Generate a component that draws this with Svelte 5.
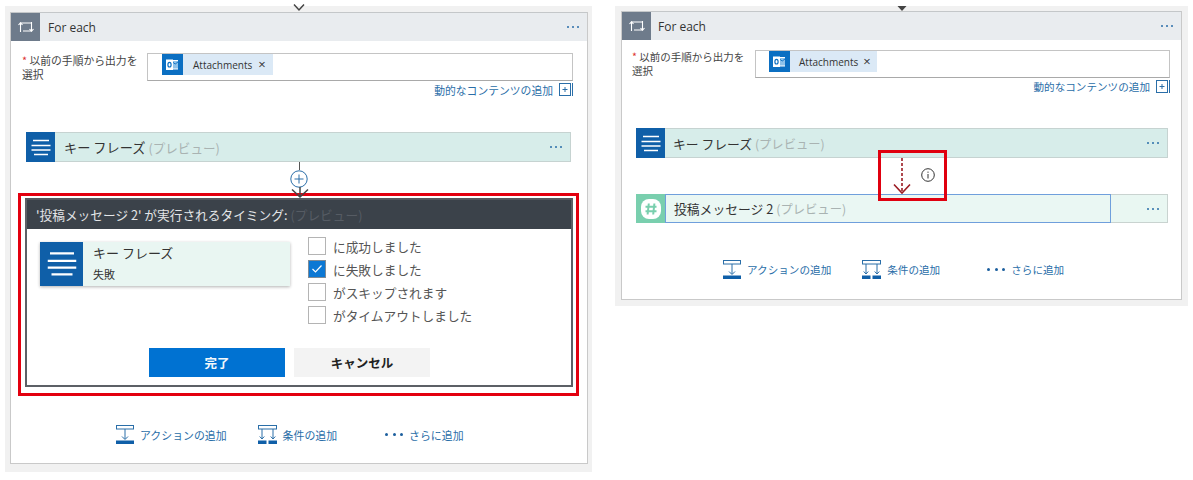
<script>
  const checks = [
    { label: 'に成功しました', on: false },
    { label: 'に失敗しました', on: true },
    { label: 'がスキップされます', on: false },
    { label: 'がタイムアウトしました', on: false }
  ];
</script>

{#snippet loopIcon()}
  <svg class="loop" width="18" height="14" viewBox="0 0 18 14" fill="none" stroke="#fff" stroke-width="1.1">
    <path d="M3.5 12V3H14.5M14.5 2V11H6" />
    <path d="M1.5 5L3.5 2.8L5.5 5M12.5 9L14.5 11.2L16.5 9" />
  </svg>
{/snippet}

{#snippet linesIcon(w)}
  <svg width={w} height={w * 0.85} viewBox="0 0 20 17" stroke="#fff" stroke-width="1.5">
    <path d="M2 1.5H18M0.5 6.5H19.5M0.5 11H19.5M3 15.5H17" />
  </svg>
{/snippet}

{#snippet outlook()}
  <svg width="21" height="21" viewBox="0 0 21 21">
    <rect width="21" height="21" fill="#0b6fc2" />
    <rect x="5" y="6" width="11" height="9.5" fill="#fff" />
    <rect x="10.5" y="7" width="5.5" height="7.5" fill="#8ec2ea" />
    <path d="M10.5 8l2.7 2 2.8-2" stroke="#0b6fc2" stroke-width="0.9" fill="none" />
    <rect x="4" y="5.5" width="7" height="10.5" fill="#fff" />
    <ellipse cx="7.5" cy="10.7" rx="1.6" ry="2.3" fill="none" stroke="#0b6fc2" stroke-width="1.2" />
  </svg>
{/snippet}

{#snippet addBox()}
  <svg width="14" height="13" viewBox="0 0 14 13" fill="none" stroke="#2a6ea8">
    <rect x="0.5" y="0.5" width="11" height="12" />
    <path d="M13.5 0V13M6 4V9M3.5 6.5H8.5" />
  </svg>
{/snippet}

{#snippet actionIcon()}
  <svg width="18" height="19" viewBox="0 0 18 19" fill="none" stroke="#2a6ea8">
    <rect x="0.5" y="0.5" width="17" height="3.5" />
    <path d="M9 4V14M6 11.5L9 14.5L12 11.5" />
    <rect x="0" y="15.5" width="18" height="3.5" fill="#0f5fa8" stroke="none" />
  </svg>
{/snippet}

{#snippet conditionIcon()}
  <svg width="19" height="19" viewBox="0 0 19 19" fill="none" stroke="#2a6ea8">
    <rect x="0.5" y="0.5" width="18" height="3.5" />
    <path d="M4 4V14M1.7 11.5L4 14L6.3 11.5M15 4V14M12.7 11.5L15 14L17.3 11.5" />
    <rect x="0" y="15.5" width="8.5" height="3.5" fill="#0f5fa8" stroke="none" />
    <rect x="10.5" y="15.5" width="8.5" height="3.5" fill="#0f5fa8" stroke="none" />
  </svg>
{/snippet}

{#snippet more()}
  <span class="more"><i></i><i></i><i></i></span>
{/snippet}

{#snippet header()}
  <div class="card-head">
    <div class="head-icon">{@render loopIcon()}</div>
    <span class="head-title">For each</span>
    {@render more()}
  </div>
{/snippet}

{#snippet form()}
  <div class="form-row">
    <div class="field-label"><span class="req">*</span> 以前の手順から出力を<br />選択</div>
    <div class="field-box">
      <span class="chip">
        {@render outlook()}
        <span class="chip-text">Attachments</span>
        <span class="chip-x">×</span>
      </span>
    </div>
  </div>
  <div class="dyn-link">動的なコンテンツの追加 {@render addBox()}</div>
{/snippet}

{#snippet keyBar()}
  <div class="step key">
    <div class="step-icon">{@render linesIcon(20)}</div>
    <div class="step-name">キー フレーズ <span class="preview">(プレビュー)</span></div>
    {@render more()}
  </div>
{/snippet}

{#snippet footer()}
  <div class="footer">
    <span class="foot-item">{@render actionIcon()}アクションの追加</span>
    <span class="foot-item">{@render conditionIcon()}条件の追加</span>
    <span class="foot-item third"><span class="foot-dots"><i></i><i></i><i></i></span>さらに追加</span>
  </div>
{/snippet}

<div class="page">
  <section class="panel left">
    <svg class="top-arrow" width="12" height="9" viewBox="0 0 12 9" fill="none" stroke="#444" stroke-width="1.5"><path d="M1 1.5L6 7L11 1.5" /></svg>
    <div class="card">
      {@render header()}
      {@render form()}
      {@render keyBar()}

      <div class="connector">
        <span class="conn-line"></span>
        <span class="plus">
          <svg width="18" height="18" viewBox="0 0 18 18" fill="#fff" stroke="#2a6ea8"><circle cx="9" cy="9" r="8.2" /><path d="M9 4.5V13.5M4.5 9H13.5" /></svg>
        </span>
        <svg class="conn-arrow" width="20" height="11" viewBox="0 0 20 11" fill="none" stroke="#444" stroke-width="1.5"><path d="M10 0V10M2 2.5L10 10L18 2.5" /></svg>
      </div>

      <div class="red-frame">
        <div class="dialog">
          <div class="dialog-head">
            <span>'投稿メッセージ 2' が実行されるタイミング:</span>
            <span class="ghost">(プレビュー)</span>
          </div>
          <div class="dialog-body">
            <div class="source">
              <div class="source-icon">{@render linesIcon(30)}</div>
              <div class="source-text">
                <div class="source-name">キー フレーズ</div>
                <div class="source-sub">失敗</div>
              </div>
            </div>
            <ul class="checks">
              {#each checks as c}
                <li>
                  <span class="box" class:on={c.on}>
                    {#if c.on}
                      <svg width="12" height="10" viewBox="0 0 12 10" fill="none" stroke="#fff" stroke-width="1.2"><path d="M1.5 5L4.5 8L10.5 1.5" /></svg>
                    {/if}
                  </span>
                  {c.label}
                </li>
              {/each}
            </ul>
          </div>
          <div class="dialog-buttons">
            <button class="primary">完了</button>
            <button class="secondary">キャンセル</button>
          </div>
        </div>
      </div>

      {@render footer()}
    </div>
  </section>

  <section class="panel right">
    <svg class="top-arrow" width="10" height="5" viewBox="0 0 10 5" fill="#444"><path d="M0.5 0H9.5L5 5Z" /></svg>
    <div class="card">
      {@render header()}
      {@render form()}
      {@render keyBar()}

      <div class="gap-link">
        <div class="note-frame">
          <svg class="dash" width="20" height="38" viewBox="0 0 20 38" fill="none" stroke="#9c1c24" stroke-width="1.6">
            <path d="M10 0V35" stroke-dasharray="3 2" />
            <path d="M2 26.5L10 35L18 26.5" />
          </svg>
          <svg class="info" width="14" height="14" viewBox="0 0 14 14" fill="none" stroke="#333"><circle cx="7" cy="7" r="6.3" /><path d="M7 6V10.5M7 3.6V4.8" /></svg>
        </div>
      </div>

      <div class="step slack">
        <div class="step-icon">
          <svg width="20" height="20" viewBox="0 0 20 20"><rect width="20" height="20" rx="8" fill="#fff" /><path d="M7.8 4.5L6.6 15.5M13.4 4.5L12.2 15.5M4.5 7.8H15.5M4.5 12.2H15.5" stroke="#79cfae" stroke-width="2" /></svg>
        </div>
        <div class="step-name">投稿メッセージ 2 <span class="preview">(プレビュー)</span></div>
        <div class="slack-end">{@render more()}</div>
      </div>

      {@render footer()}
    </div>
  </section>
</div>

<style>
  :global(body) {
    margin: 0;
    background: #fff;
    font-family: "Open Sans", "Noto Sans CJK JP", sans-serif;
    color: #333;
  }
  .page {
    display: flex;
    align-items: flex-start;
    gap: 23px;
    padding: 6px 0 0 5px;
  }
  .panel {
    position: relative;
    background: #f1f1f1;
    box-sizing: border-box;
  }
  .panel.left {
    width: 587px;
    height: 466px;
    padding: 6px 4px 8px 5px;
  }
  .panel.right {
    width: 573px;
    height: 300px;
    padding: 5px 6px 6px;
  }
  .top-arrow {
    position: absolute;
    top: -3px;
    left: 288px;
  }
  .right .top-arrow {
    top: 0;
    left: 282px;
  }
  .card {
    position: relative;
    height: 100%;
    box-sizing: border-box;
    background: #fff;
    border: 1px solid #c9c9c9;
    border-top: 0;
  }
  .card-head {
    display: flex;
    align-items: center;
    height: 29px;
    background: #e9ecef;
    border-top: 1px solid #c4c7c9;
    box-sizing: border-box;
  }
  .head-icon {
    width: 29px;
    height: 100%;
    background: #6e7b8b;
    display: flex;
    align-items: center;
    justify-content: center;
  }
  .head-title {
    margin-left: 8px;
    font-size: 12px;
    flex: 1;
  }
  .right .head-title {
    margin-left: 7px;
  }
  .more {
    display: flex;
    gap: 3px;
    margin-right: 8px;
  }
  .more i {
    width: 2px;
    height: 2px;
    background: #2a6ea8;
    border-radius: 50%;
  }
  .form-row {
    display: flex;
    margin: 12px 14px 0 11px;
  }
  .right .form-row {
    margin: 10px 11px 0 10px;
  }
  .field-label {
    width: 125px;
    flex: none;
    font-size: 10.8px;
    line-height: 14px;
    color: #444;
    white-space: nowrap;
    font-family: "Noto Sans CJK JP", sans-serif;
  }
  .right .field-label {
    width: 123px;
    font-size: 10.5px;
  }
  .req {
    color: #d33;
  }
  .field-box {
    flex: 1;
    height: 28px;
    box-sizing: border-box;
    border: 1px solid #c4c4c4;
    border-bottom-color: #a9a9a9;
    padding: 0 0 0 14px;
  }
  .right .field-box {
    padding-left: 13px;
  }
  .chip {
    display: inline-flex;
    align-items: center;
    height: 21px;
    width: 111px;
    background: #dbe9f6;
    font-size: 10px;
    vertical-align: top;
  }
  .right .chip {
    width: 108px;
  }
  .chip-text {
    margin-left: 10px;
  }
  .right .chip-text {
    margin-left: 9px;
  }
  .chip-x {
    margin-left: 6px;
    font-size: 13px;
    line-height: 1;
  }
  .right .chip-x {
    margin-left: 5px;
  }
  .dyn-link {
    display: flex;
    justify-content: flex-end;
    align-items: center;
    gap: 6px;
    margin: 2px 14px 0 0;
    height: 13px;
    font-size: 10.8px;
    color: #2a6ea8;
    font-family: "Noto Sans CJK JP", sans-serif;
  }
  .right .dyn-link {
    margin: 2px 11px 0 0;
    font-size: 10.6px;
  }
  .step {
    display: flex;
    align-items: center;
    height: 30px;
    box-sizing: border-box;
    margin: 36px 16px 0 15px;
    background: #d7edea;
    border: 1px solid #c6d3d1;
    font-family: "Noto Sans CJK JP", sans-serif;
  }
  .right .step.key {
    margin: 35px 13px 0 14px;
  }
  .step-icon {
    width: 29px;
    height: 30px;
    margin: -1px 0 -1px -1px;
    background: #0f5fa8;
    display: flex;
    align-items: center;
    justify-content: center;
    flex: none;
  }
  .step-name {
    flex: 1;
    margin-left: 9px;
    font-size: 13.2px;
  }
  .right .step-name {
    margin-left: 8px;
    font-size: 12.8px;
  }
  .preview {
    color: #a9b3b2;
    font-size: 12.6px;
  }
  .right .preview {
    font-size: 12.3px;
  }
  .connector {
    position: relative;
    height: 31px;
  }
  .conn-line {
    position: absolute;
    left: 288px;
    top: 0;
    width: 1px;
    height: 8px;
    background: #555;
  }
  .plus {
    position: absolute;
    left: 279px;
    top: 8px;
    line-height: 0;
  }
  .conn-arrow {
    position: absolute;
    left: 279px;
    top: 25px;
    z-index: 2;
  }
  .red-frame {
    position: relative;
    margin: 0 8px 0 7px;
    height: 203px;
    box-sizing: border-box;
    border: 3px solid #e3000f;
    padding: 2px 3px 6px 4px;
  }
  .dialog {
    height: 100%;
    box-sizing: border-box;
    border: 2px solid #5c6066;
    border-top-color: #55595f;
    background: #fff;
    display: flex;
    flex-direction: column;
    font-family: "Noto Sans CJK JP", sans-serif;
  }
  .dialog-head {
    height: 29px;
    background: #3b424a;
    color: #e4e6e8;
    display: flex;
    align-items: center;
    gap: 3px;
    padding-left: 9px;
    font-size: 12.7px;
    flex: none;
  }
  .ghost {
    color: #565c64;
  }
  .dialog-body {
    display: flex;
    flex: 1;
    padding: 13px 0 0 13px;
  }
  .source {
    display: flex;
    width: 250px;
    height: 44px;
    background: #e9f6f2;
    box-shadow: 0 1px 3px rgba(0, 0, 0, 0.3);
  }
  .source-icon {
    width: 43px;
    background: #0f5fa8;
    display: flex;
    align-items: center;
    justify-content: center;
  }
  .source-text {
    margin-left: 10px;
  }
  .source-name {
    font-size: 13px;
    line-height: 20px;
    margin-top: 1px;
  }
  .source-sub {
    font-size: 11px;
    line-height: 20px;
    margin-top: 1px;
  }
  .checks {
    list-style: none;
    margin: -5px 0 0 18px;
    padding: 0;
    font-size: 12.7px;
    color: #555;
  }
  .checks li {
    display: flex;
    align-items: center;
    gap: 7px;
    height: 18px;
    margin-bottom: 5px;
  }
  .box {
    width: 18px;
    height: 18px;
    box-sizing: border-box;
    border: 1px solid #b4b4b4;
    display: flex;
    align-items: center;
    justify-content: center;
    flex: none;
  }
  .box.on {
    background: #0c78d4;
    border-color: #7f8b96;
  }
  .dialog-buttons {
    display: flex;
    gap: 9px;
    padding: 0 0 8px 122px;
    flex: none;
  }
  button {
    width: 136px;
    height: 29px;
    border: 0;
    font: 700 12.5px "Noto Sans CJK JP", sans-serif;
    padding: 0;
  }
  .primary {
    background: #0072d2;
    color: #f4f8fb;
  }
  .secondary {
    background: #f3f3f3;
    color: #222;
  }
  .footer {
    display: flex;
    align-items: center;
    height: 19px;
    margin: 29px 0 0 105px;
    font-size: 10.9px;
    color: #2a6ea8;
    font-family: "Noto Sans CJK JP", sans-serif;
  }
  .right .footer {
    margin: 37px 0 0 101px;
    font-size: 10.6px;
  }
  .foot-item {
    display: flex;
    align-items: center;
    gap: 6px;
    margin-right: 31px;
  }
  .foot-item.third {
    margin-left: 17px;
    margin-right: 0;
  }
  .right .foot-item.third {
    margin-left: 16px;
  }
  .foot-dots {
    display: flex;
    gap: 4.5px;
    width: 18px;
  }
  .foot-dots i {
    width: 3px;
    height: 3px;
    background: #1c5f9e;
    border-radius: 50%;
    flex: none;
  }
  .gap-link {
    position: relative;
    height: 36px;
  }
  .note-frame {
    position: absolute;
    left: 256px;
    top: -8px;
    width: 69px;
    height: 51px;
    box-sizing: border-box;
    border: 3px solid #e0000f;
    z-index: 2;
  }
  .dash {
    position: absolute;
    left: 11px;
    top: 5px;
  }
  .info {
    position: absolute;
    left: 40px;
    top: 15px;
  }
  .right .step.slack {
    margin: 0 13px 0 14px;
    height: 29px;
    background: #e9f7f2;
    border: 1px solid #c9d3d0;
  }
  .slack .step-icon {
    background: #79cfae;
    height: 29px;
  }
  .slack .step-name {
    align-self: stretch;
    margin: -1px 0;
    padding-left: 8px;
    display: flex;
    align-items: center;
    gap: 3px;
    border: 1px solid #6f9fdc;
    background: #eaf7f3;
  }
  .slack-end {
    width: 56px;
    display: flex;
    justify-content: flex-end;
  }
</style>
